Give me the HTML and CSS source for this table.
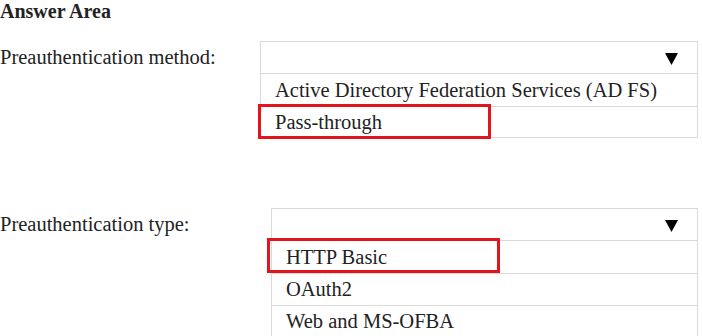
FILE: index.html
```html
<!DOCTYPE html>
<html>
<head>
<meta charset="utf-8">
<link rel="stylesheet" href="styles.css">
</head>
<body>
<div class="page">
  <h1 class="title">Answer Area</h1>

  <div class="question q1">
    <div class="label">Preauthentication method:</div>
    <div class="box">
      <div class="head"><svg class="arrow" width="13" height="12" viewBox="0 0 13 12"><polygon points="0,0 13,0 6.5,12" fill="#000"/></svg></div>
      <div class="opt r33">Active Directory Federation Services (AD FS)</div>
      <div class="opt r31 selected">Pass-through<span class="hl"></span></div>
    </div>
  </div>

  <div class="question q2">
    <div class="label">Preauthentication type:</div>
    <div class="box">
      <div class="head"><svg class="arrow" width="13" height="12" viewBox="0 0 13 12"><polygon points="0,0 13,0 6.5,12" fill="#000"/></svg></div>
      <div class="opt r33 selected">HTTP Basic<span class="hl"></span></div>
      <div class="opt r32">OAuth2</div>
      <div class="opt r32">Web and MS-OFBA</div>
    </div>
  </div>
</div>
</body>
</html>
```

FILE: styles.css
```css
html, body {
  margin: 0;
  padding: 0;
  background: #fff;
}
.page {
  width: 703px;
  height: 336px;
  font-family: "Liberation Serif", "Times New Roman", serif;
  color: #222;
}
.title {
  margin: 0;
  font-size: 20px;
  font-weight: bold;
  line-height: 22px;
  height: 41px;
}
.question {
  display: flex;
  align-items: flex-start;
}
.q2 {
  margin-top: 70px;
}
.label {
  font-size: 20.5px;
  line-height: 32px;
}
.q1 .label { width: 260px; }
.q2 .label { width: 271px; }
.box {
  border: 1.5px solid #d9d9d9;
  box-sizing: border-box;
}
.q1 .box { width: 438px; }
.q2 .box { width: 427px; }
.head {
  height: 31px;
  display: flex;
  align-items: center;
  justify-content: flex-end;
  padding-right: 19px;
}
.arrow { display: block; margin-top: 2px; }
.opt {
  position: relative;
  border-top: 1.5px solid #d9d9d9;
  font-size: 20.5px;
  display: flex;
  align-items: center;
  padding-left: 14px;
}
.r31 { height: 30px; }
.r32 { height: 31px; }
.r33 { height: 32px; }
.hl {
  position: absolute;
  top: -3px;
  width: 233px;
  height: 35px;
  box-sizing: border-box;
  border: 3px solid #e3141b;
}
.q1 .hl { left: -3px; }
.q2 .hl { left: -5px; }
```
